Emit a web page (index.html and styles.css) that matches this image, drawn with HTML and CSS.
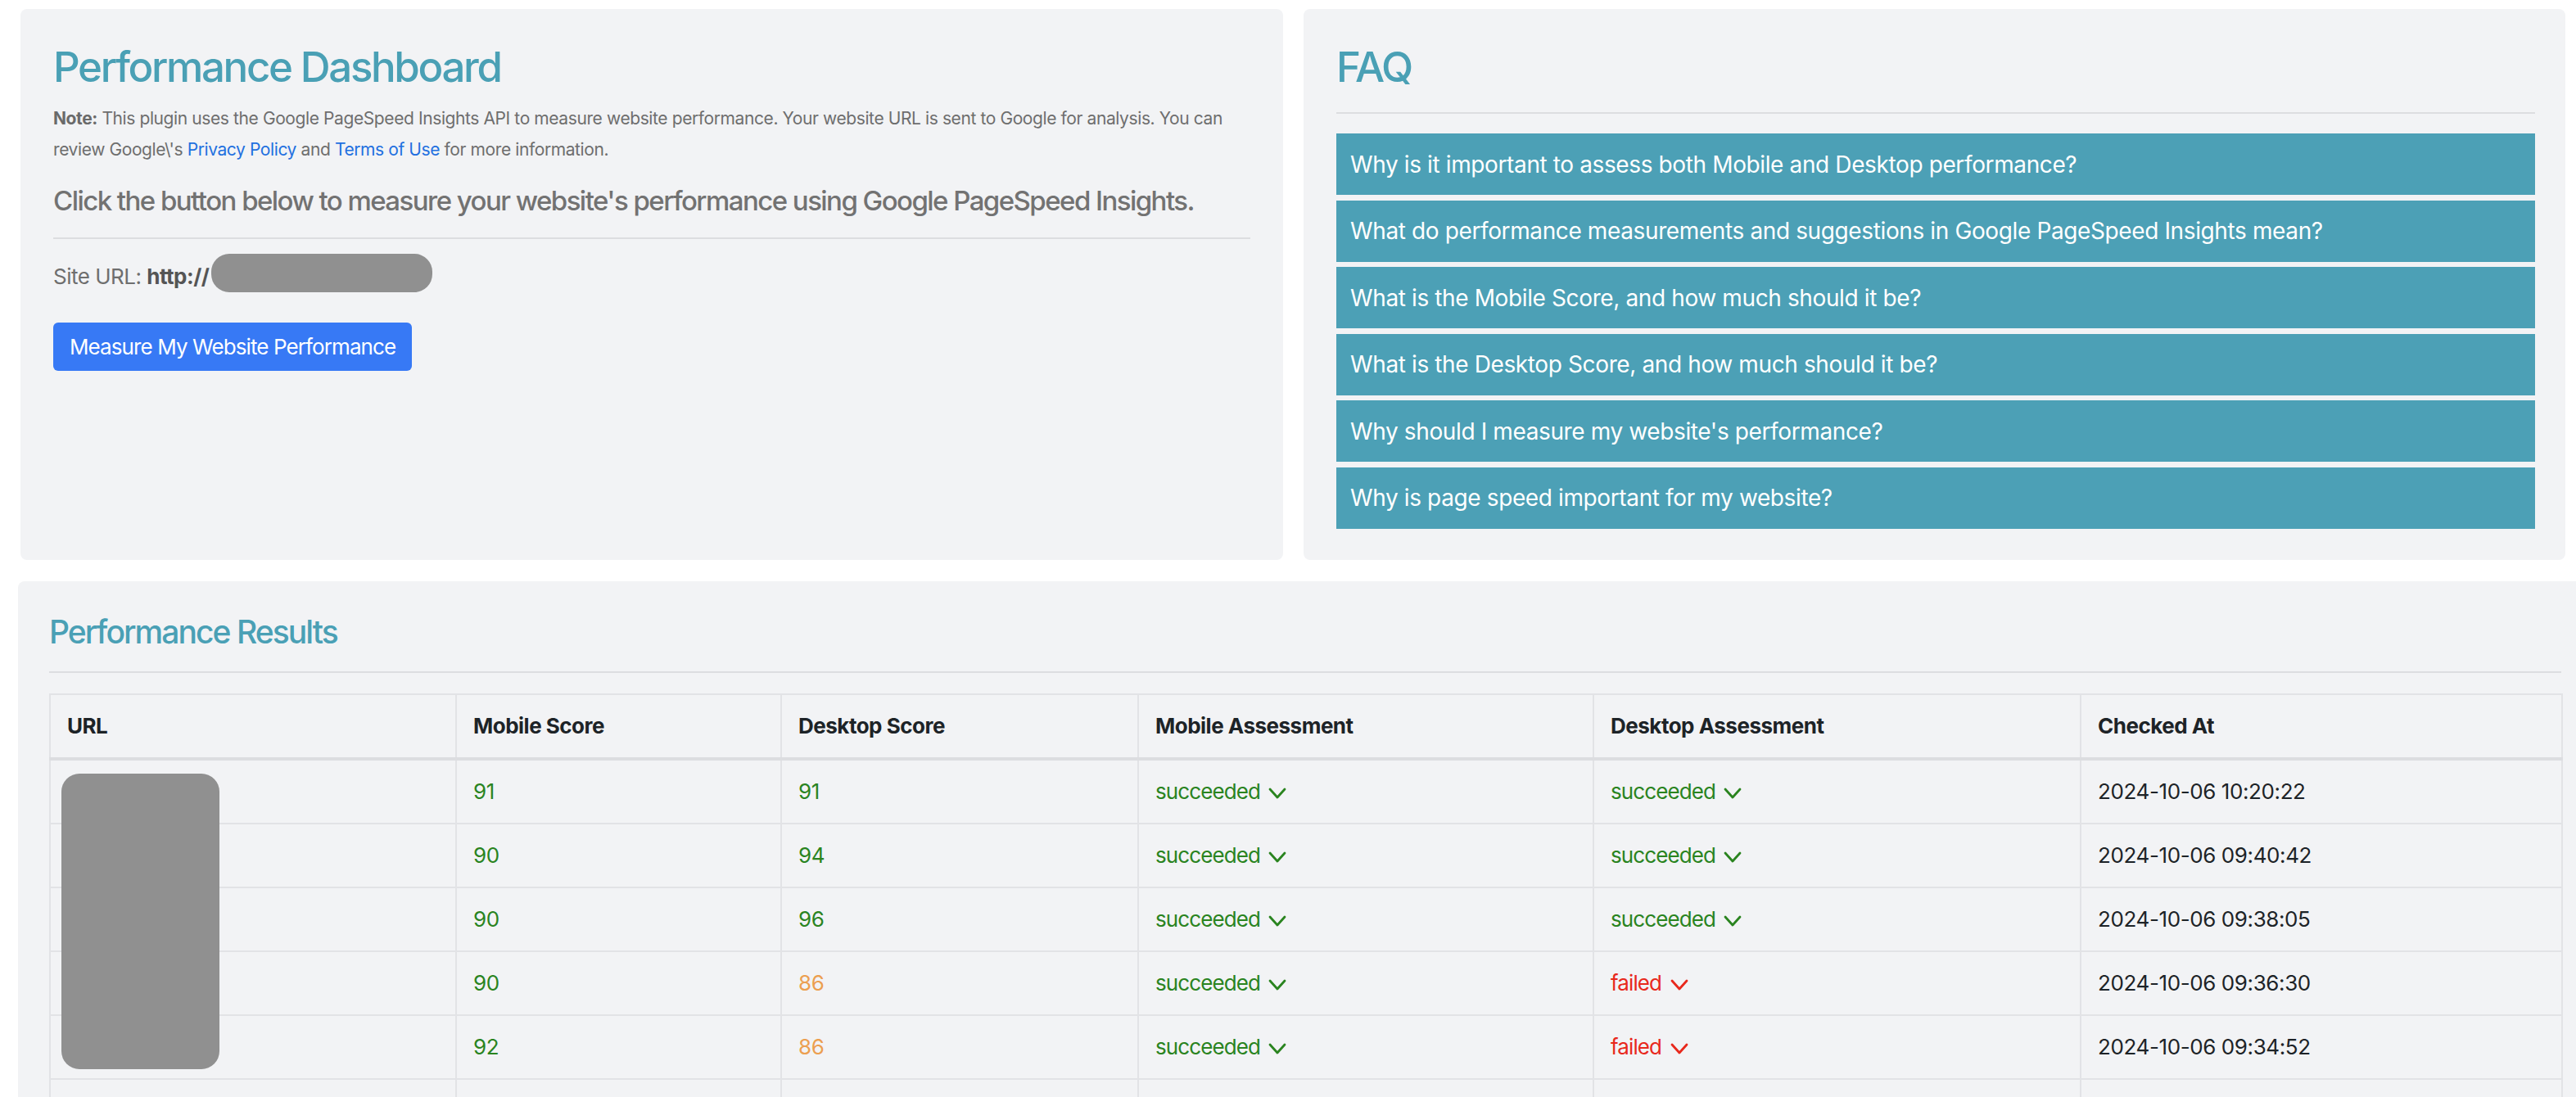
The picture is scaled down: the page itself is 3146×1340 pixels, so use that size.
FILE: index.html
```html
<!DOCTYPE html>
<html lang="en">
<head>
<meta charset="utf-8">
<title>Performance Dashboard</title>
<link rel="stylesheet" href="styles.css">
</head>
<body>
<div class="page">
  <div class="top-row">
    <section class="card dash">
      <h1 class="title">Performance Dashboard</h1>
      <p class="note"><strong>Note:</strong> This plugin uses the Google PageSpeed Insights API to measure website performance. Your website URL is sent to Google for analysis. You can<br>review Google\'s <a href="#">Privacy Policy</a> and <a href="#">Terms of Use</a> for more information.</p>
      <p class="lead">Click the button below to measure your website's performance using Google PageSpeed Insights.</p>
      <hr class="rule">
      <div class="site"><span class="site-label">Site URL: <strong>http://</strong></span><span class="redact pill"></span></div>
      <button class="measure" type="button">Measure My Website Performance</button>
    </section>
    <section class="card faq">
      <h1 class="title">FAQ</h1>
      <hr class="rule faq-rule">
      <div class="faq-list">
        <button class="faq-item" type="button">Why is it important to assess both Mobile and Desktop performance?</button>
        <button class="faq-item" type="button">What do performance measurements and suggestions in Google PageSpeed Insights mean?</button>
        <button class="faq-item" type="button">What is the Mobile Score, and how much should it be?</button>
        <button class="faq-item" type="button">What is the Desktop Score, and how much should it be?</button>
        <button class="faq-item" type="button">Why should I measure my website's performance?</button>
        <button class="faq-item" type="button">Why is page speed important for my website?</button>
      </div>
    </section>
  </div>
  <section class="card results">
    <h2 class="subtitle">Performance Results</h2>
    <hr class="rule results-rule">
    <div class="table-wrap">
      <table class="results-table">
        <colgroup>
          <col class="c-url"><col class="c-ms"><col class="c-ds"><col class="c-ma"><col class="c-da"><col class="c-at">
        </colgroup>
        <thead>
          <tr><th>URL</th><th>Mobile Score</th><th>Desktop Score</th><th>Mobile Assessment</th><th>Desktop Assessment</th><th>Checked At</th></tr>
        </thead>
        <tbody>
          <tr><td></td><td class="good">91</td><td class="good">91</td><td class="good as">succeeded <svg class="chev" viewBox="0 0 22 14"><polyline points="2,2 11,12 20,2"/></svg></td><td class="good as">succeeded <svg class="chev" viewBox="0 0 22 14"><polyline points="2,2 11,12 20,2"/></svg></td><td>2024-10-06 10:20:22</td></tr>
          <tr><td></td><td class="good">90</td><td class="good">94</td><td class="good as">succeeded <svg class="chev" viewBox="0 0 22 14"><polyline points="2,2 11,12 20,2"/></svg></td><td class="good as">succeeded <svg class="chev" viewBox="0 0 22 14"><polyline points="2,2 11,12 20,2"/></svg></td><td>2024-10-06 09:40:42</td></tr>
          <tr><td></td><td class="good">90</td><td class="good">96</td><td class="good as">succeeded <svg class="chev" viewBox="0 0 22 14"><polyline points="2,2 11,12 20,2"/></svg></td><td class="good as">succeeded <svg class="chev" viewBox="0 0 22 14"><polyline points="2,2 11,12 20,2"/></svg></td><td>2024-10-06 09:38:05</td></tr>
          <tr><td></td><td class="good">90</td><td class="avg">86</td><td class="good as">succeeded <svg class="chev" viewBox="0 0 22 14"><polyline points="2,2 11,12 20,2"/></svg></td><td class="bad as">failed <svg class="chev" viewBox="0 0 22 14"><polyline points="2,2 11,12 20,2"/></svg></td><td>2024-10-06 09:36:30</td></tr>
          <tr><td></td><td class="good">92</td><td class="avg">86</td><td class="good as">succeeded <svg class="chev" viewBox="0 0 22 14"><polyline points="2,2 11,12 20,2"/></svg></td><td class="bad as">failed <svg class="chev" viewBox="0 0 22 14"><polyline points="2,2 11,12 20,2"/></svg></td><td>2024-10-06 09:34:52</td></tr>
          <tr><td></td><td class="good">91</td><td class="good">92</td><td class="good as">succeeded <svg class="chev" viewBox="0 0 22 14"><polyline points="2,2 11,12 20,2"/></svg></td><td class="good as">succeeded <svg class="chev" viewBox="0 0 22 14"><polyline points="2,2 11,12 20,2"/></svg></td><td>2024-10-06 09:30:11</td></tr>
        </tbody>
      </table>
      <span class="redact url-block"></span>
    </div>
  </section>
</div>
</body>
</html>
```

FILE: styles.css
```css
html, body {
  margin: 0;
  padding: 0;
  background: #ffffff;
  overflow: hidden;
}

body {
  font-family: Inter, "Noto Sans", "Liberation Sans", sans-serif;
  color: #1d2327;
}

.page {
  padding-top: 11px;
  width: 3166px;
}

.top-row {
  display: grid;
  grid-template-columns: 1542px 1541px;
  column-gap: 25px;
  margin-left: 25px;
}

.card {
  background: #f2f3f5;
  border-radius: 8px;
  box-sizing: border-box;
}

.dash {
  padding: 40px 40px 38px 40px;
}

.faq {
  padding: 40px 37px 38px 40px;
}

.title {
  margin: 0;
  font-size: 51px;
  line-height: 62px;
  font-weight: 500;
  color: #4aa0b5;
  letter-spacing: -2.35px;
}

.note {
  margin: 13px 0 0 0;
  font-size: 21px;
  line-height: 38px;
  color: #6e6e6e;
  letter-spacing: -0.4px;
  white-space: nowrap;
}

.note strong {
  color: #6a6a6a;
}

.note a {
  color: #2270e0;
  text-decoration: none;
}

.lead {
  margin: 23px 0 0 0;
  font-size: 33px;
  line-height: 40px;
  font-weight: 500;
  color: #727272;
  letter-spacing: -1.55px;
  white-space: nowrap;
}

.rule {
  border: 0;
  height: 2px;
  background: #dcdde0;
  margin: 25px 0 0 0;
}

.site {
  display: flex;
  align-items: center;
  margin-top: 18px;
  height: 47px;
  font-size: 26px;
  line-height: 32px;
  color: #6e6e6e;
  letter-spacing: -0.5px;
}

.site-label {
  padding-top: 8px;
  white-space: pre;
}

.site-label strong {
  color: #555555;
}

.redact {
  display: block;
  background: #909090;
}

.pill {
  width: 270px;
  height: 47px;
  border-radius: 22px;
  margin-left: 3px;
}

.measure {
  display: block;
  margin-top: 37px;
  height: 59px;
  padding: 0 20px;
  border: 0;
  border-radius: 6px;
  background: #3779f5;
  color: #ffffff;
  font-family: inherit;
  font-size: 26px;
  line-height: 59px;
  letter-spacing: -0.9px;
}

.faq-rule {
  margin: 24px 0 24px 0;
}

.faq-list {
  display: flex;
  flex-direction: column;
  gap: 6.6px;
}

.faq-item {
  display: block;
  width: 100%;
  height: 75px;
  padding: 0 17px;
  border: 0;
  background: #4ca0b6;
  color: #ffffff;
  font-family: inherit;
  font-size: 28px;
  letter-spacing: -0.38px;
  text-align: left;
}

.results {
  margin: 26px 0 0 22px;
  width: 3144px;
  padding: 38px 38px 40px 38px;
}

.subtitle {
  margin: 0;
  font-size: 39px;
  line-height: 47px;
  font-weight: 500;
  color: #4aa0b5;
  letter-spacing: -1.95px;
}

.results-rule {
  margin: 25px 0 25px 0;
}

.table-wrap {
  position: relative;
}

.results-table {
  width: 3068px;
  table-layout: fixed;
  border-collapse: collapse;
  border: 2px solid #dcdde0;
  font-size: 26px;
  letter-spacing: -0.4px;
}

.c-url { width: 496px; }
.c-ms { width: 397px; }
.c-ds { width: 436px; }
.c-ma { width: 556px; }
.c-da { width: 595px; }
.c-at { width: 588px; }

.results-table th,
.results-table td {
  text-align: left;
  padding: 17px 20px;
  line-height: 42px;
  border: 2px solid #e2e3e6;
  vertical-align: middle;
}

.results-table th {
  padding: 17px 20px;
  font-weight: 700;
  color: #1d2327;
  letter-spacing: -0.5px;
  border-bottom: 4px solid #dcdde0;
}

.results-table td {
  color: #1d2327;
}

.results-table td.good { color: #2a841f; }
.results-table td.avg { color: #ec9f50; }
.results-table td.bad { color: #e8281c; }
.results-table td.as { letter-spacing: -0.9px; }

.chev {
  width: 22px;
  height: 14px;
  margin-left: 4px;
  vertical-align: 0;
  fill: none;
  stroke: currentColor;
  stroke-width: 2.8;
  stroke-linecap: round;
  stroke-linejoin: round;
}

.url-block {
  position: absolute;
  left: 15px;
  top: 98px;
  width: 193px;
  height: 361px;
  border-radius: 22px;
}
```
